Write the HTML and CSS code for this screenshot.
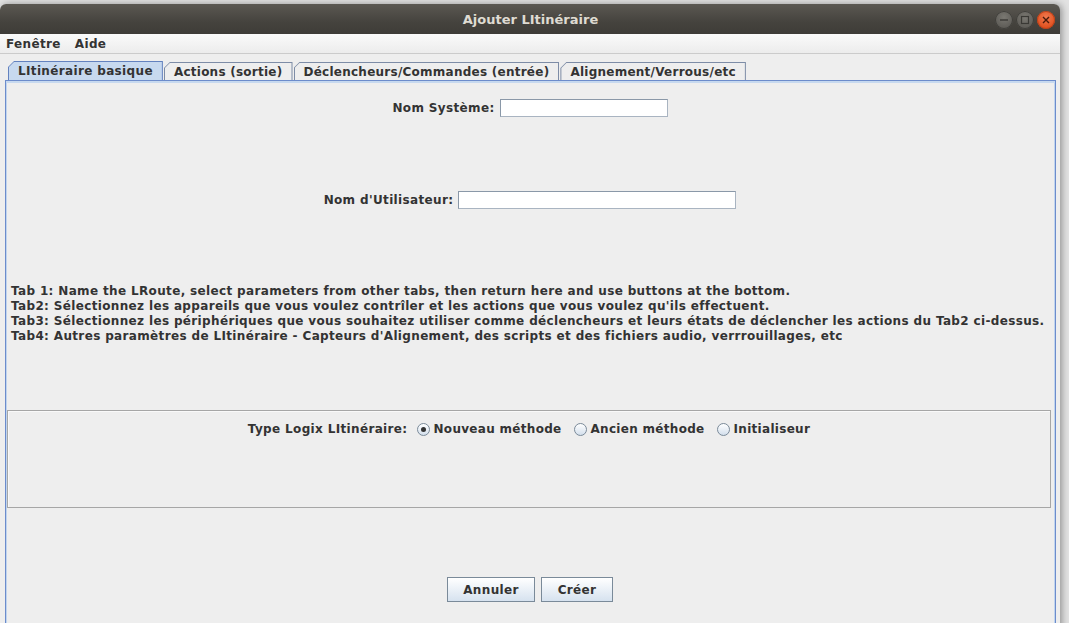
FILE: index.html
```html
<!DOCTYPE html>
<html lang="fr">
<head>
<meta charset="utf-8">
<title>Ajouter LItinéraire</title>
<link rel="stylesheet" href="styles.css">
</head>
<body>
<div class="screen">
  <div class="window">
    <div class="titlebar">
      <span class="spacer"></span>
      <span class="title">Ajouter LItinéraire</span>
      <div class="wm-buttons">
        <span class="wm wm-min"><svg width="18" height="18" viewBox="0 0 18 18"><line x1="5" y1="9" x2="13" y2="9" stroke="#3a3935" stroke-width="1.4"/></svg></span>
        <span class="wm wm-max"><svg width="18" height="18" viewBox="0 0 18 18"><rect x="5.5" y="5.5" width="7" height="7" fill="none" stroke="#3a3935" stroke-width="1.2"/></svg></span>
        <span class="wm wm-close"><svg width="18" height="18" viewBox="0 0 18 18"><path d="M6 6 L12 12 M12 6 L6 12" stroke="#4a1a0a" stroke-width="1.4"/></svg></span>
      </div>
    </div>
    <div class="menubar">
      <span class="menu">Fenêtre</span>
      <span class="menu">Aide</span>
    </div>
    <div class="client">
      <div class="tabs">
        <div class="tab selected"><span class="tab-in">LItinéraire basique</span></div>
        <div class="tab"><span class="tab-in">Actions (sortie)</span></div>
        <div class="tab"><span class="tab-in">Déclencheurs/Commandes (entrée)</span></div>
        <div class="tab"><span class="tab-in">Alignement/Verrous/etc</span></div>
      </div>
      <div class="tabpanel">
        <div class="field-row row-sys">
          <span class="label">Nom Système:</span>
          <span class="input input-sys"></span>
        </div>
        <div class="field-row row-user">
          <span class="label">Nom d'Utilisateur:</span>
          <span class="input input-user"></span>
        </div>
        <div class="help">
          <div>Tab 1: Name the LRoute, select parameters from other tabs, then return here and use buttons at the bottom.</div>
          <div>Tab2: Sélectionnez les appareils que vous voulez contrîler et les actions que vous voulez qu'ils effectuent.</div>
          <div>Tab3: Sélectionnez les périphériques que vous souhaitez utiliser comme déclencheurs et leurs états de déclencher les actions du Tab2 ci-dessus.</div>
          <div>Tab4: Autres paramètres de LItinéraire - Capteurs d'Alignement, des scripts et des fichiers audio, verrrouillages, etc</div>
        </div>
        <div class="typebox">
          <div class="radio-row">
            <span class="label type-label">Type Logix LItinéraire:</span>
            <span class="radio"><span class="circle checked"></span>Nouveau méthode</span>
            <span class="radio"><span class="circle"></span>Ancien méthode</span>
            <span class="radio"><span class="circle"></span>Initialiseur</span>
          </div>
        </div>
        <div class="buttons">
          <span class="btn btn-cancel">Annuler</span>
          <span class="btn btn-create">Créer</span>
        </div>
      </div>
    </div>
  </div>
</div>
</body>
</html>
```

FILE: styles.css
```css
html, body {
  margin: 0;
  padding: 0;
}
body {
  background: #e2e2e2;
  overflow: hidden;
  width: 1069px;
  height: 623px;
  font-family: "DejaVu Sans", sans-serif;
}
.screen {
  padding-top: 4px;
  height: 619px;
  overflow: hidden;
}
.window {
  width: 1060px;
  height: 640px;
  background: #eeeeee;
  border-radius: 6px 6px 0 0;
  box-shadow: 2px 0 7px rgba(0,0,0,0.35);
  display: flex;
  flex-direction: column;
}
.titlebar {
  height: 30px;
  flex: none;
  border-radius: 6px 6px 0 0;
  background: linear-gradient(#5b5852, #45433e 60%, #3e3c38);
  display: grid;
  grid-template-columns: 1fr auto 1fr;
  align-items: center;
}
.title {
  color: #dfdbd2;
  font-weight: bold;
  font-size: 13px;
  margin-left: 1px;
}
.wm-buttons {
  justify-self: end;
  display: flex;
  gap: 3px;
  margin-right: 5px;
  margin-top: 1px;
}
.wm {
  width: 18px;
  height: 18px;
  border-radius: 50%;
  display: block;
}
.wm svg { display: block; }
.wm-min, .wm-max {
  background: radial-gradient(circle at 50% 35%, #7a7872, #5e5c57 70%);
  box-shadow: inset 0 0 0 1px #3f3e3a;
}
.wm-close {
  background: radial-gradient(circle at 50% 35%, #f27a4f, #e0501f 70%);
  box-shadow: inset 0 0 0 1px #b9421b;
}
.menubar {
  height: 19px;
  flex: none;
  background: linear-gradient(#fafafa, #ececec);
  border-bottom: 1px solid #cbcbcb;
  display: flex;
  align-items: center;
  gap: 14px;
  padding-left: 6px;
}
.menu {
  font-weight: bold;
  font-size: 12px;
  letter-spacing: 0.35px;
  color: #333333;
}
.client {
  flex: 1;
  padding: 8px 4px 0 5px;
  display: flex;
  flex-direction: column;
}
.tabs {
  display: flex;
  margin-left: 3px;
  height: 18px;
  align-items: flex-end;
}
.tab {
  background: #7d8ca6;
  padding: 1px 1px 0 1px;
  clip-path: polygon(6px 0, 100% 0, 100% 100%, 0 100%, 0 6px);
  height: 17px;
}
.tab + .tab { margin-left: 1px; }
.tab-in {
  display: block;
  height: 17px;
  line-height: 18px;
  padding: 0 9px 0 9px;
  background: #eeeeee;
  clip-path: polygon(5px 0, 100% 0, 100% 100%, 0 100%, 0 5px);
  font-weight: bold;
  font-size: 12px;
  letter-spacing: 0.25px;
  color: #333333;
}
.tab.selected {
  background: #6382bf;
  height: 18px;
  padding-bottom: 0;
}
.tab.selected .tab-in {
  background: #c7d9ef;
  height: 18px;
  letter-spacing: 0.35px;
}
.tabpanel {
  flex: 1;
  border: 1px solid #6c8ccb;
  border-bottom: none;
  box-shadow: inset 0 2px 0 #c7d9ef, inset 1px 0 0 #c0d4ee, inset -1px 0 0 #c0d4ee;
  display: flex;
  flex-direction: column;
  padding: 0 2px 0 1px;
}
.label {
  font-weight: bold;
  font-size: 12px;
  letter-spacing: 0.35px;
  color: #333333;
}
.field-row {
  display: flex;
  justify-content: center;
  align-items: center;
  gap: 5px;
  height: 18px;
}
.row-sys { margin-top: 18px; }
.row-user { margin-top: 74px; }
.input {
  display: block;
  height: 16px;
  background: #ffffff;
  border: 1px solid #8a98a8;
  border-right-color: #a9b4c1;
  border-bottom-color: #a9b4c1;
}
.input-sys { width: 166px; }
.input-user { width: 276px; }
.help {
  margin-top: 75px;
  padding-left: 4px;
  font-weight: bold;
  font-size: 12px;
  letter-spacing: 0.35px;
  line-height: 15px;
  color: #333333;
  white-space: nowrap;
}
.typebox {
  margin-top: 66px;
  height: 96px;
  border: 1px solid #a6a6a6;
  box-shadow: inset 1px 1px 0 #f9f9f9;
  margin-right: 2px;
}
.radio-row {
  margin-top: 10px;
  height: 16px;
  display: flex;
  justify-content: center;
  align-items: center;
}
.type-label { margin-right: 9px; }
.radio {
  display: flex;
  align-items: center;
  font-weight: bold;
  font-size: 12px;
  letter-spacing: 0.3px;
  color: #333333;
}
.radio + .radio { margin-left: 12px; }
.circle {
  width: 11px;
  height: 11px;
  border-radius: 50%;
  border: 1px solid #7a8a99;
  background: linear-gradient(#ffffff, #d3dfec);
  margin-right: 4px;
  position: relative;
}
.circle.checked::after {
  content: "";
  position: absolute;
  left: 3px;
  top: 3px;
  width: 5px;
  height: 5px;
  border-radius: 50%;
  background: #333333;
}
.buttons {
  margin-top: 69px;
  display: flex;
  justify-content: center;
  gap: 6px;
}
.btn {
  display: flex;
  align-items: center;
  justify-content: center;
  height: 23px;
  border: 1px solid #7a8a99;
  background: linear-gradient(#ffffff, #d6e2ef);
  font-weight: bold;
  font-size: 12px;
  letter-spacing: 0.35px;
  color: #333333;
}
.btn-cancel { width: 86px; }
.btn-create { width: 70px; }
```
